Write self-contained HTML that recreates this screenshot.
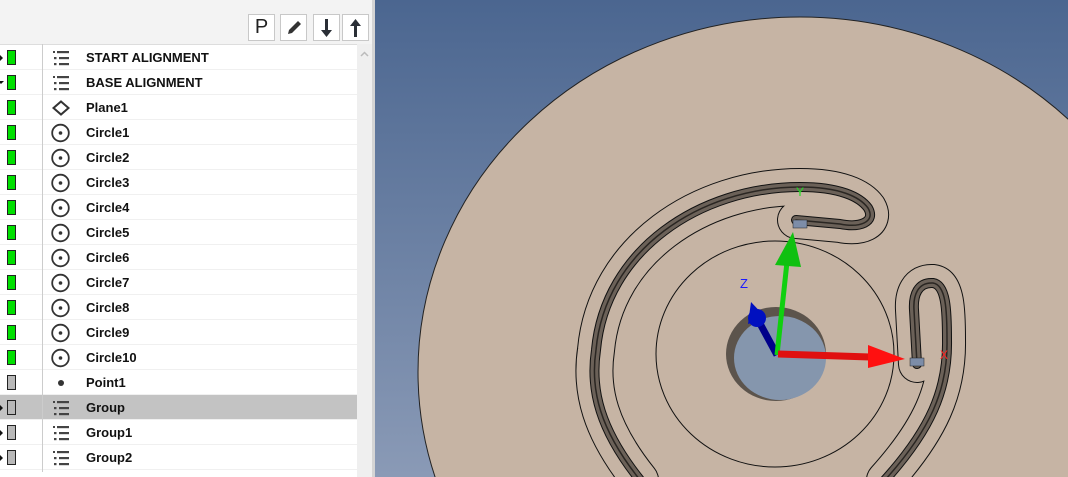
<!DOCTYPE html>
<html><head><style>
*{margin:0;padding:0;box-sizing:border-box}
html,body{width:1068px;height:477px;overflow:hidden}
body{position:relative;background:#fff;font-family:"Liberation Sans",Arial,sans-serif}
#left{position:absolute;left:0;top:0;width:372px;height:477px;background:#f3f3f3}
#list{position:absolute;left:0;top:44px;width:357px;height:433px;background:#fff;border-top:1px solid #ddd}
#sb{position:absolute;left:357px;top:44px;width:15px;height:433px;background:#efefef}
#div{position:absolute;left:372px;top:0;width:3px;height:477px;background:#d4d4d4}
.btn{position:absolute;top:14px;width:27px;height:27px;border:1px solid #c8c8c8;background:#fff}
.row{position:absolute;left:0;width:357px;height:25px;border-bottom:1px solid #f0f0f0}
.row .t{position:absolute;left:86px;top:5px;font-size:13px;font-weight:bold;color:#111}
.ind{position:absolute;left:7px;top:5px;width:9px;height:15px;border:1px solid #222;background:#00e000}
.ind.g{background:#b8b8b8}
.ar{position:absolute;left:0;top:10px;width:0;height:0;border-top:3px solid transparent;border-bottom:3px solid transparent;border-left:3px solid #111}
.ic{position:absolute;left:50px;top:3px}
#sep{position:absolute;left:42px;top:44px;width:1px;height:428px;background:#ccc}
#view{position:absolute;left:375px;top:0;width:693px;height:477px;background:linear-gradient(#4b6690,#8a9ab6);overflow:hidden}
</style></head><body>
<div id="left">
<div class="btn" style="left:248px;font-size:20px;text-align:center;line-height:25px;color:#222">P</div>
<div class="btn" style="left:280px"><svg width="25" height="25"><path d="M7 19 L8 15 L17 6 L20 9 L11 18 Z" fill="#333"/></svg></div>
<div class="btn" style="left:313px"><svg width="25" height="25"><path d="M11 4h3v11h4l-5.5 7-5.5-7h4z" fill="#2a2f36"/></svg></div>
<div class="btn" style="left:342px"><svg width="25" height="25"><path d="M11 22h3V11h4L12.5 4 7 11h4z" fill="#2a2f36"/></svg></div>
</div>
<div id="list"></div>
<div id="sb"><svg width="15" height="15" style="position:absolute;top:3px"><path d="M4 9l3.5-3.5L11 9" stroke="#bbb" stroke-width="1.5" fill="none"/></svg></div>
<div id="div"></div>
<div id="rows"></div>
<div id="sep"></div>
<script>
var items=[["START ALIGNMENT","L",1,1],["BASE ALIGNMENT","L",1,2],["Plane1","P",1,0],["Circle1","C",1,0],["Circle2","C",1,0],["Circle3","C",1,0],["Circle4","C",1,0],["Circle5","C",1,0],["Circle6","C",1,0],["Circle7","C",1,0],["Circle8","C",1,0],["Circle9","C",1,0],["Circle10","C",1,0],["Point1","D",0,0],["Group","L",0,1],["Group1","L",0,1],["Group2","L",0,1]];
var h="";
var icons={
L:'<svg width="22" height="20"><rect x="3" y="3" width="2" height="2" fill="#444"/><rect x="7" y="3" width="12" height="2.2" fill="#444"/><rect x="4" y="9" width="2.5" height="2.2" fill="#444"/><rect x="9" y="9" width="10" height="2.2" fill="#444"/><rect x="4" y="15" width="2.5" height="2.2" fill="#444"/><rect x="9" y="15" width="10" height="2.2" fill="#444"/></svg>',
P:'<svg width="22" height="20"><path d="M11 3.5 L18.5 10 L11 16.5 L3.5 10 Z" fill="none" stroke="#333" stroke-width="2"/></svg>',
C:'<svg width="22" height="20"><circle cx="10.5" cy="10" r="8.3" fill="none" stroke="#333" stroke-width="1.8"/><circle cx="10.5" cy="10" r="1.8" fill="#333"/></svg>',
D:'<svg width="22" height="20"><circle cx="11" cy="10" r="3" fill="#333"/></svg>'};
items.forEach(function(it,i){
 var top=45+25*i;
 var bg=it[0]=="Group"?"#c3c3c3":"#fff";
 h+='<div class="row" style="top:'+top+'px;background:'+bg+'">'+(it[3]==1?'<div class="ar"></div>':'')+(it[3]==2?'<div class="ar" style="border-left:3px solid transparent;border-top:3px solid #111;border-right:3px solid transparent;border-bottom:0;left:-2px;top:11px"></div>':'')+'<div class="ind'+(it[2]?'':' g')+'"></div><div class="ic">'+icons[it[1]]+'</div><div class="t">'+it[0]+'</div></div>';
});
document.getElementById("rows").innerHTML=h;
</script>
<div id="view">
<svg width="693" height="477" viewBox="375 0 693 477">
<defs>
<path id="g1" d="M640 480 C600 430 590 390 596 350 C605 250 700 187 800 187 C840 187 860 197 868 208 C876 222 860 228 840 224 L796 220"/>
<path id="g2" d="M885 480 C930 430 948 390 947 340 C947 310 946 285 933 283 C918 282 913 295 914 310 L917 364"/>
</defs>
<ellipse cx="800" cy="372" rx="382" ry="355" fill="#c6b4a4" stroke="#222" stroke-width="1"/>
<ellipse cx="775" cy="354" rx="119" ry="113" fill="none" stroke="#111" stroke-width="1"/>
<g fill="none" stroke-linecap="round" stroke-linejoin="round">
<use href="#g1" stroke="#111" stroke-width="38"/><use href="#g1" stroke="#c6b4a4" stroke-width="36"/>
<use href="#g1" stroke="#111" stroke-width="10"/><use href="#g1" stroke="#6b6158" stroke-width="8"/><use href="#g1" stroke="#2a2622" stroke-width="1.5"/>
<use href="#g2" stroke="#111" stroke-width="38"/><use href="#g2" stroke="#c6b4a4" stroke-width="36"/>
<use href="#g2" stroke="#111" stroke-width="10"/><use href="#g2" stroke="#6b6158" stroke-width="8"/><use href="#g2" stroke="#2a2622" stroke-width="1.5"/>
</g>
<ellipse cx="776" cy="354" rx="50" ry="47" fill="#5c544c"/>
<ellipse cx="780" cy="358" rx="46" ry="42" fill="#8596ad"/>
<rect x="793" y="220" width="14" height="8" fill="#7d8da8" stroke="#222" stroke-width="0.5"/>
<rect x="910" y="358" width="14" height="8" fill="#7d8da8" stroke="#222" stroke-width="0.5"/>
<path d="M777 355 L757 318" stroke="#00008a" stroke-width="7"/>
<path d="M751 302 L766 318 L748 324 Z" fill="#0010c0"/>
<circle cx="757" cy="318" r="9" fill="#0010c0"/>
<path d="M777 355 L787 262" stroke="#10d010" stroke-width="5"/>
<path d="M793 232 L801 267 L775 265 Z" fill="#10c010"/>
<path d="M778 354 L870 357" stroke="#e01010" stroke-width="7"/>
<path d="M905 359 L868 345 L868 368 Z" fill="#ff1010"/>
<text x="740" y="288" fill="#1a1aff" font-size="13" font-family="Liberation Sans">Z</text>
<text x="796" y="196" fill="#20e020" font-size="12" font-family="Liberation Sans">Y</text>
<text x="940" y="359" fill="#ff2020" font-size="12" font-family="Liberation Sans">X</text>
</svg>
</div>
</body></html>
